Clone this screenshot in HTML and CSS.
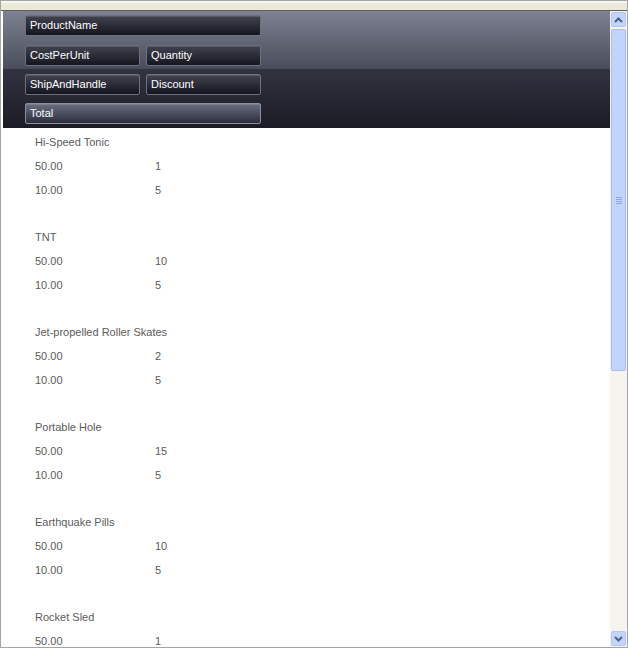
FILE: index.html
```html
<!DOCTYPE html>
<html lang="en">
<head>
    <meta charset="UTF-8">
    <title>Orders</title>
    <link rel="stylesheet" href="styles.css">
</head>
<body>
    <div class="window">
        <div class="topbar"></div>
        <div class="main">
            <div class="pane">
                <!-- field header -->
                <div class="header">
                    <div class="field-row">
                        <div class="field wide">ProductName</div>
                    </div>
                    <div class="field-row">
                        <div class="field">CostPerUnit</div>
                        <div class="field">Quantity</div>
                    </div>
                    <div class="field-row">
                        <div class="field">ShipAndHandle</div>
                        <div class="field">Discount</div>
                    </div>
                    <div class="field-row">
                        <div class="field wide active">Total</div>
                    </div>
                </div>

                <!-- records -->
                <div class="records">
                    <div class="record">
                        <div class="line">Hi-Speed Tonic</div>
                        <div class="line"><span class="col">50.00</span><span>1</span></div>
                        <div class="line"><span class="col">10.00</span><span>5</span></div>
                        <div class="line"></div>
                    </div>
                    <div class="record">
                        <div class="line">TNT</div>
                        <div class="line"><span class="col">50.00</span><span>10</span></div>
                        <div class="line"><span class="col">10.00</span><span>5</span></div>
                        <div class="line"></div>
                    </div>
                    <div class="record">
                        <div class="line">Jet-propelled Roller Skates</div>
                        <div class="line"><span class="col">50.00</span><span>2</span></div>
                        <div class="line"><span class="col">10.00</span><span>5</span></div>
                        <div class="line"></div>
                    </div>
                    <div class="record">
                        <div class="line">Portable Hole</div>
                        <div class="line"><span class="col">50.00</span><span>15</span></div>
                        <div class="line"><span class="col">10.00</span><span>5</span></div>
                        <div class="line"></div>
                    </div>
                    <div class="record">
                        <div class="line">Earthquake Pills</div>
                        <div class="line"><span class="col">50.00</span><span>10</span></div>
                        <div class="line"><span class="col">10.00</span><span>5</span></div>
                        <div class="line"></div>
                    </div>
                    <div class="record">
                        <div class="line">Rocket Sled</div>
                        <div class="line"><span class="col">50.00</span><span>1</span></div>
                    </div>
                </div>
            </div>

            <!-- scrollbar -->
            <div class="scrollbar">
                <div class="sb-btn">
                    <svg width="9" height="6" viewBox="0 0 9 6"><path d="M1 5 L4.5 1.5 L8 5" fill="none" stroke="#4d6185" stroke-width="2"/></svg>
                </div>
                <div class="sb-track">
                    <div class="sb-thumb">
                        <div class="grip"></div>
                    </div>
                </div>
                <div class="sb-btn">
                    <svg width="9" height="6" viewBox="0 0 9 6"><path d="M1 1 L4.5 4.5 L8 1" fill="none" stroke="#4d6185" stroke-width="2"/></svg>
                </div>
            </div>
        </div>
    </div>
</body>
</html>
```

FILE: styles.css
```css
body {
    margin: 0;
    padding: 0;
    background: #ffffff;
    font-family: 'Liberation Sans', Arial, sans-serif;
    font-size: 11px;
}

.window {
    width: 628px;
    height: 648px;
    box-sizing: border-box;
    border: 1px solid #a5a5a5;
    display: flex;
    flex-direction: column;
    overflow: hidden;
}

.topbar {
    height: 7px;
    background: #ece9d8;
    border-top: 2px solid #f7f6f1;
    border-bottom: 1px solid #5e5e5e;
    flex-shrink: 0;
}

.main {
    flex: 1;
    display: flex;
    min-height: 0;
    padding-left: 2px;
}

.pane {
    flex: 1;
    overflow: hidden;
}

/* header with the field boxes */
.header {
    height: 117px;
    box-sizing: border-box;
    padding: 4px 0 0 22px;
    background: linear-gradient(to bottom, #7e8292 0%, #5f6372 28%, #4a4e5c 49%, #313340 50%, #262733 75%, #1b1b25 100%);
    display: flex;
    flex-direction: column;
}

.field-row {
    display: flex;
    gap: 6px;
    margin-bottom: 8px;
}

.field-row:first-child {
    margin-bottom: 9px;
}

.field {
    width: 115px;
    height: 21px;
    box-sizing: border-box;
    padding-left: 4px;
    line-height: 19px;
    color: #ffffff;
    border: 1px solid #6d707e;
    border-radius: 2px;
    background: linear-gradient(to bottom, #41434f 0%, #2b2c38 50%, #15161e 100%);
    box-shadow: inset 0 1px 0 rgba(255, 255, 255, 0.12);
}

.field.wide {
    width: 236px;
}

.field.active {
    border-color: #8b8f9d;
    background: linear-gradient(to bottom, #6a6f80 0%, #4a4e5e 50%, #2b2d3b 100%);
}

/* record list */
.records {
    padding: 3px 0 0 32px;
    color: #5b5b5b;
}

.line {
    height: 23.75px;
    line-height: 23.75px;
    white-space: nowrap;
}

.col {
    display: inline-block;
    width: 120px;
}

/* scrollbar */
.scrollbar {
    width: 17px;
    flex-shrink: 0;
    background: #f4f3ee;
    display: flex;
    flex-direction: column;
    padding: 1px;
    box-sizing: border-box;
    gap: 2px;
}

.sb-btn {
    height: 15px;
    box-sizing: border-box;
    border: 1px solid #b3c6f3;
    border-radius: 2px;
    background: #c4d5fc;
    display: flex;
    align-items: center;
    justify-content: center;
}

.sb-track {
    flex: 1;
}

.sb-thumb {
    height: 342px;
    box-sizing: border-box;
    border: 1px solid #a9bdef;
    border-radius: 2px;
    background: #c3d4fc;
    display: flex;
    align-items: center;
    justify-content: center;
}

.grip {
    width: 6px;
    height: 7px;
    background: repeating-linear-gradient(to bottom, #8fa6e6 0px, #8fa6e6 1px, transparent 1px, transparent 2px);
}
```
